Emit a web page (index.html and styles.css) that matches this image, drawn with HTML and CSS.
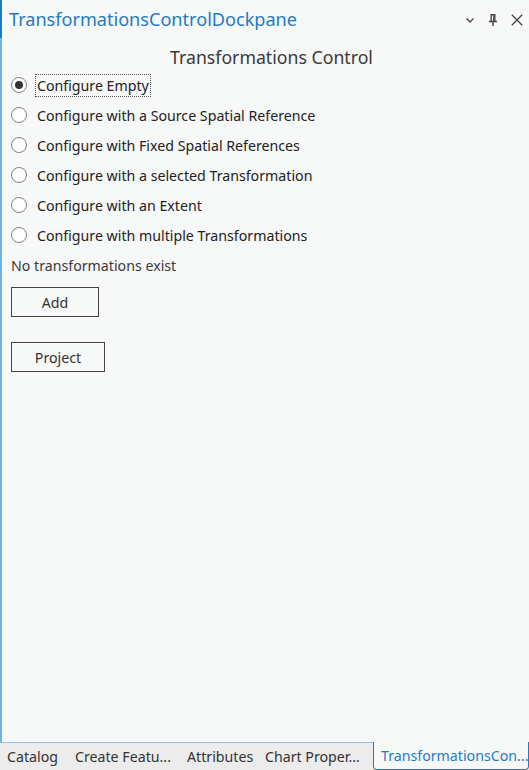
FILE: index.html
```html
<!DOCTYPE html>
<html>
<head>
<meta charset="utf-8">
<link rel="stylesheet" href="styles.css">
</head>
<body>
<div class="app">
  <div class="pane">
    <div class="titlebar">
      <div class="title">TransformationsControlDockpane</div>
      <div class="tools">
        <svg class="ico ico-chev" width="10" height="12" viewBox="0 0 10 12"><path d="M1.5 4.5 L5 8 L8.5 4.5" fill="none" stroke="#444" stroke-width="1.3"/></svg>
        <svg class="ico ico-pin" width="10" height="12" viewBox="0 0 10 12"><path d="M2.5 0.8 H7.5 M3.2 0.8 V7.5 M6.8 0.8 V7.5 M1 7.5 H9 M5 7.5 V12" fill="none" stroke="#444" stroke-width="1.4"/><path d="M5.6 1.5 V7" stroke="#444" stroke-width="1"/></svg>
        <svg class="ico ico-x" width="12" height="12" viewBox="0 0 12 12"><path d="M0.8 0.8 L11.2 11.2 M11.2 0.8 L0.8 11.2" fill="none" stroke="#444" stroke-width="1.3"/></svg>
      </div>
    </div>
    <div class="content">
      <div class="heading">Transformations Control</div>
      <div class="options">
        <div class="opt"><span class="radio checked"></span><span class="label focus">Configure Empty</span></div>
        <div class="opt"><span class="radio"></span><span class="label">Configure with a Source Spatial Reference</span></div>
        <div class="opt"><span class="radio"></span><span class="label">Configure with Fixed Spatial References</span></div>
        <div class="opt"><span class="radio"></span><span class="label">Configure with a selected Transformation</span></div>
        <div class="opt"><span class="radio"></span><span class="label">Configure with an Extent</span></div>
        <div class="opt"><span class="radio"></span><span class="label">Configure with multiple Transformations</span></div>
      </div>
      <div class="status">No transformations exist</div>
      <button class="btn btn-add">Add</button>
      <button class="btn btn-project">Project</button>
    </div>
  </div>
  <div class="tabs">
    <div class="tab tab-catalog">Catalog</div>
    <div class="tab tab-create">Create Featu...</div>
    <div class="tab tab-attr">Attributes</div>
    <div class="tab tab-chart">Chart Proper...</div>
    <div class="tab active">TransformationsCon...</div>
  </div>
</div>
</body>
</html>
```
FILE: styles.css
```css
html, body {
  margin: 0;
  padding: 0;
  background: #f7f8f8;
}
body {
  font-family: "Noto Sans", "Open Sans", sans-serif;
  color: #333;
  width: 529px;
  height: 770px;
  overflow: hidden;
}
.app {
  display: flex;
  flex-direction: column;
  height: 770px;
}
.pane {
  flex: 1;
  display: flex;
  flex-direction: column;
  border-left: 2px solid #6fb3e3;
  background: #f7f8f8;
  box-sizing: border-box;
}
.titlebar {
  height: 38px;
  display: flex;
  align-items: center;
  justify-content: space-between;
  padding: 0 6px 0 7px;
  border-left: 2px solid #1d7ac4;
  margin-left: -2px;
  box-sizing: border-box;
}
.title {
  font-size: 18.1px;
  color: #1f7cc4;
}
.tools {
  display: flex;
  align-items: center;
  gap: 0;
  padding-top: 1px;
}
.ico { display: block; }
.ico-chev { margin-right: 13px; }
.ico-pin { margin-right: 13px; }
.content {
  padding: 7px 0 0 9px;
  display: flex;
  flex-direction: column;
  align-items: flex-start;
}
.heading {
  align-self: stretch;
  text-align: center;
  font-size: 17.7px;
  color: #3a3a3a;
  height: 28px;
  line-height: 28px;
  padding-left: 3px;
  margin-top: -2px;
}
.options {
  display: flex;
  flex-direction: column;
  margin-top: -1px;
}
.opt {
  height: 30px;
  display: flex;
  align-items: center;
  gap: 10px;
}
.radio {
  width: 14px;
  height: 14px;
  border: 1px solid #808080;
  border-radius: 50%;
  background: #fff;
  position: relative;
  box-sizing: content-box;
}
.radio.checked::after {
  content: "";
  position: absolute;
  left: 3px;
  top: 3px;
  width: 8px;
  height: 8px;
  border-radius: 50%;
  background: #333;
}
.label {
  font-size: 14.2px;
  color: #222;
  padding: 1px 1px;
  border: 1px solid transparent;
  margin-left: -2px;
}
.label.focus {
  border: 1px dotted #555;
}
.status {
  font-size: 14.2px;
  color: #3a3a3a;
  height: 30px;
  line-height: 30px;
  margin-left: 0;
  margin-top: 1px;
}
.btn {
  font-family: inherit;
  font-size: 14.2px;
  color: #333;
  background: #f7f8f8;
  border: 1px solid #444;
  height: 30px;
  margin-left: 0;
  padding: 0;
}
.btn-add {
  width: 88px;
  margin-top: 6px;
}
.btn-project {
  width: 94px;
  margin-top: 25px;
}
.tabs {
  height: 28px;
  display: flex;
  align-items: stretch;
  background: #ececec;
  border-top: 1px solid #8fc3e8;
  box-sizing: border-box;
}
.tab {
  font-size: 14.2px;
  color: #333;
  display: flex;
  align-items: center;
  padding: 0 0 0 7px;
  white-space: nowrap;
  box-sizing: border-box;
}
.tab-catalog { width: 68px; }
.tab-create { width: 112px; }
.tab-attr { width: 78px; }
.tab-chart { width: 100px; }
.tab.active {
  margin-left: auto;
  width: 156px;
  background: #f7f8f8;
  color: #1f7cc4;
  border: 1px solid #1f7cc4;
  border-top: none;
  border-radius: 0 0 4px 4px;
  margin-top: -1px;
  padding: 0 0 0 7px;
}
```
